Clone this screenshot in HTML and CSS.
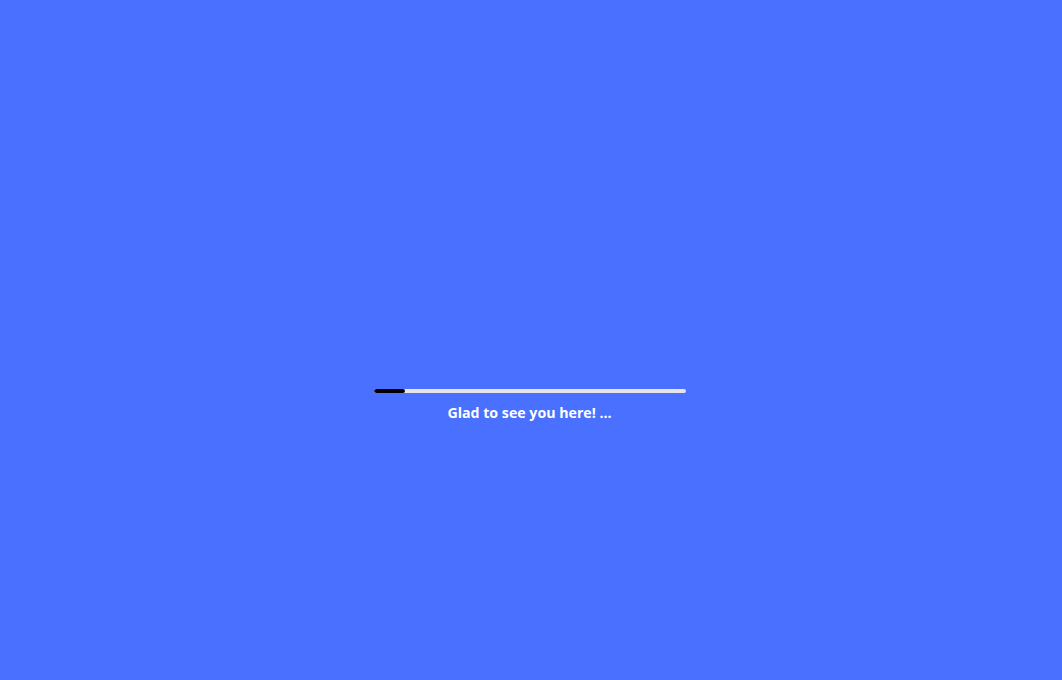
FILE: index.html
```html
<!DOCTYPE html>
<html lang="en">
<head>
<meta charset="utf-8">
<title>Loading</title>
<link rel="stylesheet" href="styles.css">
</head>
<body>
<main class="loader">
  <div class="track"><div class="fill" style="width:10%"></div></div>
  <p class="message">Glad to see you here! ...</p>
</main>
</body>
</html>
```
FILE: styles.css
```css
html, body {
  margin: 0;
  height: 100%;
  background: #4a70ff;
}
.loader {
  display: flex;
  flex-direction: column;
  align-items: center;
  padding-top: 389px;
  padding-right: 3px;
}
.track {
  width: 312px;
  height: 4px;
  background: #e4e4ea;
  border-radius: 2px;
  overflow: hidden;
}
.fill {
  height: 100%;
  background: #000;
  border-radius: 2px;
}
.message {
  margin: 10px 0 0;
  color: #fff;
  font-family: "Open Sans", "Noto Sans", sans-serif;
  font-weight: 700;
  font-size: 14.2px;
  line-height: 20px;
}
```
